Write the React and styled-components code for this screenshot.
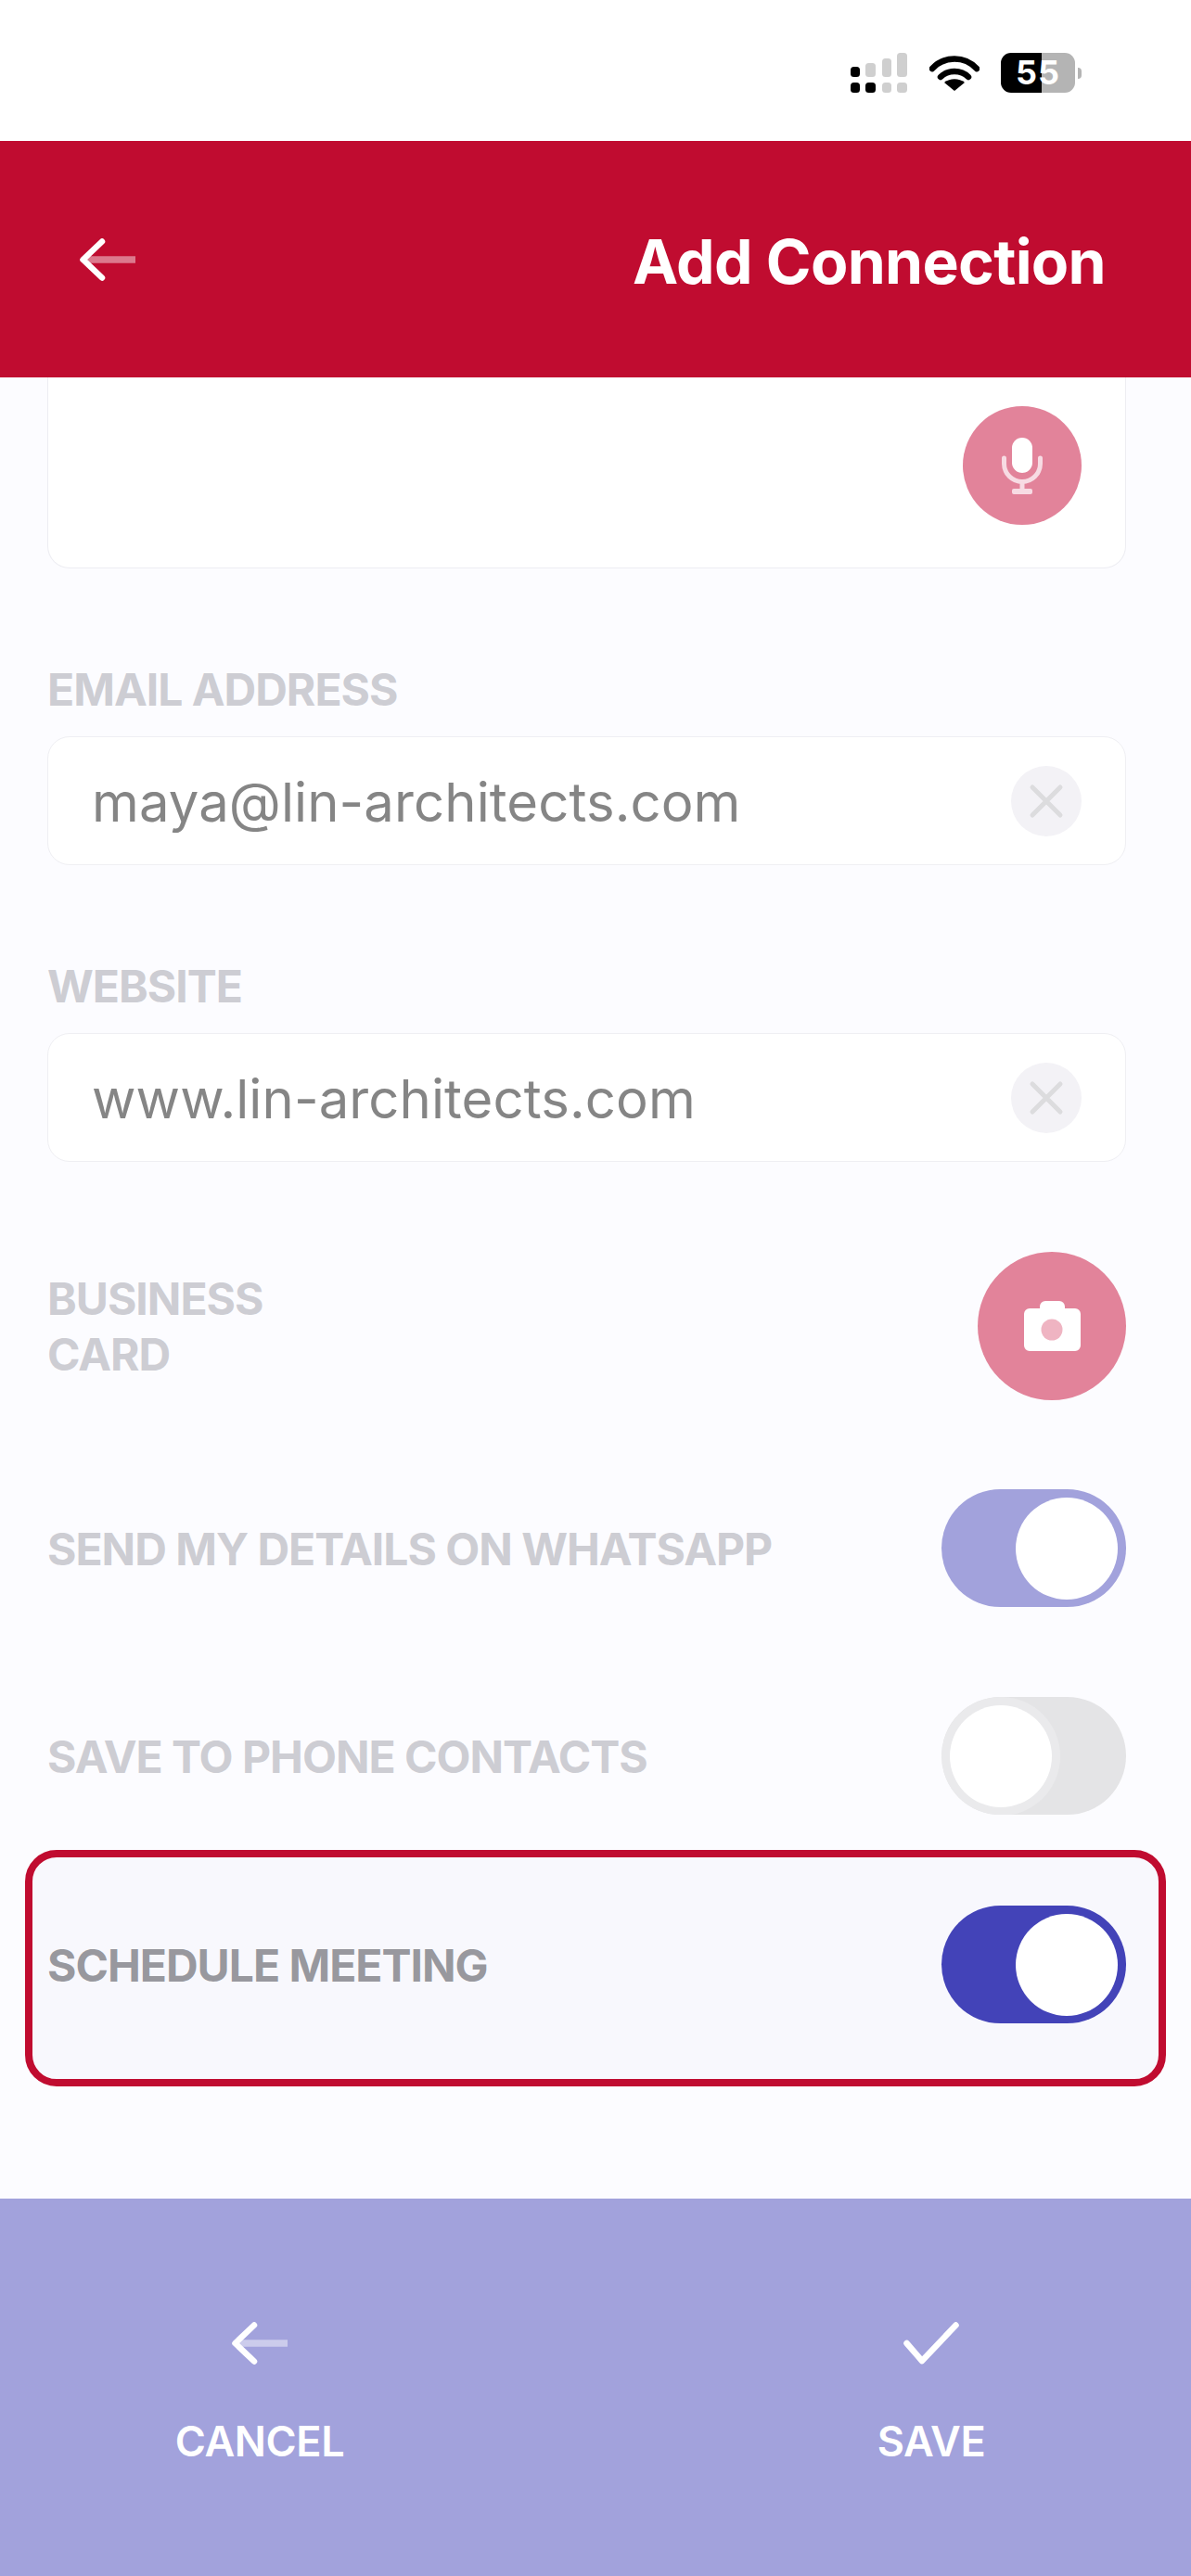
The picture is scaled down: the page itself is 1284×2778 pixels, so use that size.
import React from 'react';
import styled, { createGlobalStyle } from 'styled-components';

const GlobalStyle = createGlobalStyle`
  html, body {
    margin: 0;
    padding: 0;
    background: #fcfcff;
  }
  * {
    box-sizing: border-box;
  }
`;

const Page = styled.div`
  width: 1284px;
  height: 2778px;
  display: flex;
  flex-direction: column;
  overflow: hidden;
  background: #fcfcff;
  font-family: Inter, "Liberation Sans", sans-serif;
`;

const StatusBar = styled.div`
  height: 152px;
  background: #fff;
  display: flex;
  align-items: flex-start;
  padding: 57px 119px 0 917px;
`;

const Wifi = styled.svg`
  margin: 3px 0 0 24px;
`;

const Battery = styled.div`
  width: 80px;
  height: 43px;
  margin-left: 23px;
  border-radius: 11px;
  background: linear-gradient(90deg, #000 0 55%, #b4b4b4 55% 100%);
  color: #fff;
  font-size: 36px;
  font-weight: 700;
  line-height: 43px;
  letter-spacing: 1px;
  text-align: center;
  position: relative;

  &::after {
    content: '';
    position: absolute;
    right: -7px;
    top: 16px;
    width: 4px;
    height: 12px;
    border-radius: 0 6px 6px 0;
    background: #b4b4b4;
  }
`;

const Header = styled.header`
  height: 255px;
  background: #c00c30;
  display: flex;
  justify-content: space-between;
  align-items: flex-start;
  padding: 105px 92px 0 86px;
`;

const Title = styled.h1`
  margin: -11px 0 0;
  color: #fff;
  font-size: 66px;
  line-height: 72px;
  font-weight: 700;
  letter-spacing: -0.7px;
`;

const Form = styled.main`
  flex: 1;
  display: flex;
  flex-direction: column;
  padding: 0 70px 0 51px;
`;

const NoteCard = styled.div`
  height: 206px;
  background: #fff;
  border: 1.5px solid #ededf2;
  border-top: 0;
  border-radius: 0 0 24px 24px;
  display: flex;
  justify-content: flex-end;
  padding: 31px 47px 0 0;
`;

const RoundButton = styled.div`
  width: ${(p) => p.$size}px;
  height: ${(p) => p.$size}px;
  border-radius: 50%;
  background: ${(p) => p.$bg};
  flex: none;
  display: flex;
  align-items: center;
  justify-content: center;
`;

const Field = styled.section`
  margin-top: 99px;
`;

const Label = styled.div`
  color: ${(p) => (p.$strong ? '#98989e' : '#cdcdd3')};
  font-size: 48px;
  line-height: 60px;
  font-weight: 700;
  letter-spacing: -1px;
  padding-top: 2px;
`;

const InputBox = styled.div`
  height: 139px;
  margin-top: 20px;
  background: #fff;
  border: 1.5px solid #efeff3;
  border-radius: 24px;
  display: flex;
  align-items: center;
  justify-content: space-between;
  padding: 0 47px;
`;

const InputText = styled.span`
  color: #858585;
  font-size: 58px;
  font-weight: 400;
  letter-spacing: 0.1px;
  padding-top: 2px;
`;

const CardRow = styled.div`
  margin-top: 97px;
  height: 160px;
  display: flex;
  align-items: center;
  justify-content: space-between;
`;

const ToggleRow = styled.div`
  margin-top: ${(p) => p.$top}px;
  height: 127px;
  display: flex;
  align-items: center;
  justify-content: space-between;
`;

const Highlight = styled.div`
  margin: 38px -43px 0 -24px;
  height: 255px;
  border: 8px solid #c00c30;
  border-radius: 34px;
  background: #f8f8fd;
  padding: 52px 35px 0 16px;
`;

const Toggle = styled.div`
  width: 199px;
  height: 127px;
  border-radius: 64px;
  background: ${(p) => p.$color};
  display: flex;
  align-items: center;
  justify-content: ${(p) => (p.$on ? 'flex-end' : 'flex-start')};
  padding: 0 9px;
  flex: none;
  overflow: hidden;
`;

const Knob = styled.div`
  width: 110px;
  height: 110px;
  border-radius: 50%;
  background: #fff;
  box-shadow: ${(p) => (p.$ring ? '0 0 0 9px #eaeaec' : 'none')};
`;

const Footer = styled.footer`
  height: 407px;
  background: #a2a2dc;
  display: flex;
  justify-content: space-between;
  padding: 133px 190px 0 190px;
`;

const FooterAction = styled.div`
  width: 180px;
  display: flex;
  flex-direction: column;
  align-items: center;
  color: #fff;
  font-size: 45px;
  line-height: 54px;
  font-weight: 600;
  letter-spacing: -0.4px;
`;

const FooterIcon = styled.div`
  height: 46px;
  margin-bottom: 56px;
`;

const IconSvg = styled.svg`
  display: block;
`;

const Arrow = () => (
  <IconSvg width="60" height="46" viewBox="0 0 60 46" fill="none" strokeLinejoin="round">
    <path d="M8 23H60" stroke="#fff" strokeOpacity="0.45" strokeWidth="7.5" />
    <path d="M24 3.5L3.5 23L24 42.5" stroke="#fff" strokeWidth="6.5" strokeLinecap="round" />
  </IconSvg>
);

const ClearIcon = () => (
  <RoundButton $size={76} $bg="#f3f2f6">
    <svg width="38" height="38" viewBox="0 0 38 38" fill="none">
      <path d="M4 4L34 34M34 4L4 34" stroke="#dcdcde" strokeWidth="5" strokeLinecap="round" />
    </svg>
  </RoundButton>
);

function App() {
  return (
    <Page>
      <GlobalStyle />
      <StatusBar>
        <svg width="61" height="44" viewBox="0 0 61 44">
          <rect x="0" y="15" width="10" height="11" rx="3.5" fill="#000" />
          <rect x="0" y="32" width="10" height="11" rx="3.5" fill="#000" />
          <rect x="16" y="11" width="11" height="15" rx="3.5" fill="#cfcfcf" />
          <rect x="16" y="32" width="11" height="11" rx="3.5" fill="#000" />
          <rect x="34" y="6" width="10" height="20" rx="3.5" fill="#cfcfcf" />
          <rect x="34" y="32" width="10" height="11" rx="3.5" fill="#cfcfcf" />
          <rect x="50" y="0" width="11" height="26" rx="3.5" fill="#cfcfcf" />
          <rect x="50" y="32" width="11" height="11" rx="3.5" fill="#cfcfcf" />
        </svg>
        <Wifi width="54" height="38" viewBox="0 0 54 38" fill="none">
          <path d="M3 14C16-0 38-0 51 14" stroke="#000" strokeWidth="6.5" strokeLinecap="round" />
          <path d="M12 23C20 15 34 15 42 23" stroke="#000" strokeWidth="6.5" strokeLinecap="round" />
          <path d="M27 38L16 29C22 24 32 24 38 29Z" fill="#000" />
        </Wifi>
        <Battery>55</Battery>
      </StatusBar>

      <Header>
        <Arrow />
        <Title>Add Connection</Title>
      </Header>

      <Form>
        <NoteCard>
          <RoundButton $size={128} $bg="#e2839a">
            <svg width="128" height="128" viewBox="0 0 128 128" fill="none">
              <rect x="53" y="34" width="22" height="38" rx="11" fill="#fff" />
              <path d="M44.5 56V62A19.5 19.5 0 0 0 83.5 62V56" stroke="#f7dbe3" strokeWidth="5" strokeLinecap="round" />
              <path d="M64 81V90" stroke="#f7dbe3" strokeWidth="5" />
              <rect x="53" y="89" width="22" height="6" rx="2" fill="#f7dbe3" />
            </svg>
          </RoundButton>
        </NoteCard>

        <Field>
          <Label>EMAIL ADDRESS</Label>
          <InputBox>
            <InputText>maya@lin-architects.com</InputText>
            <ClearIcon />
          </InputBox>
        </Field>

        <Field>
          <Label>WEBSITE</Label>
          <InputBox>
            <InputText>www.lin-architects.com</InputText>
            <ClearIcon />
          </InputBox>
        </Field>

        <CardRow>
          <Label>
            BUSINESS
            <br />
            CARD
          </Label>
          <RoundButton $size={160} $bg="#e2839a">
            <svg width="160" height="160" viewBox="0 0 160 160">
              <path d="M50 67a6 6 0 0 1 6-6H67v-2a6 6 0 0 1 6-6H88a6 6 0 0 1 6 6v2H105a6 6 0 0 1 6 6V101a6 6 0 0 1-6 6H56a6 6 0 0 1-6-6Z" fill="#fff" />
              <circle cx="80" cy="84" r="11.5" fill="#efb4c2" />
            </svg>
          </RoundButton>
        </CardRow>

        <ToggleRow $top={96}>
          <Label>SEND MY DETAILS ON WHATSAPP</Label>
          <Toggle $on $color="#a2a2dc">
            <Knob />
          </Toggle>
        </ToggleRow>

        <ToggleRow $top={97}>
          <Label>SAVE TO PHONE CONTACTS</Label>
          <Toggle $color="#e4e4e6">
            <Knob $ring />
          </Toggle>
        </ToggleRow>

        <Highlight>
          <ToggleRow $top={0}>
            <Label $strong>SCHEDULE MEETING</Label>
            <Toggle $on $color="#4343b8">
              <Knob />
            </Toggle>
          </ToggleRow>
        </Highlight>
      </Form>

      <Footer>
        <FooterAction>
          <FooterIcon>
            <Arrow />
          </FooterIcon>
          CANCEL
        </FooterAction>
        <FooterAction>
          <FooterIcon>
            <IconSvg width="60" height="46" viewBox="0 0 60 46" fill="none">
              <path d="M3.5 23L20 42L56.5 3.5" stroke="#fff" strokeWidth="6.5" strokeLinecap="round" strokeLinejoin="round" />
            </IconSvg>
          </FooterIcon>
          SAVE
        </FooterAction>
      </Footer>
    </Page>
  );
}

export default App;
